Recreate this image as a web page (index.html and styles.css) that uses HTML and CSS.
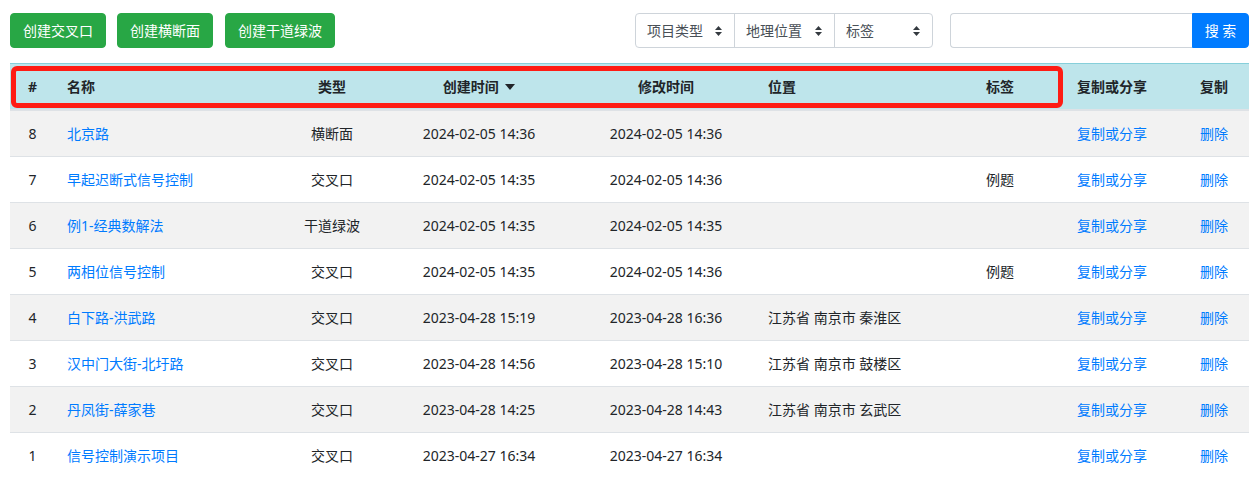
FILE: index.html
```html
<!DOCTYPE html>
<html lang="zh-CN">
<head>
<meta charset="utf-8">
<title>项目列表</title>
<link rel="stylesheet" href="styles.css">
</head>
<body>
<div class="page">
  <div class="toolbar">
    <div class="btns">
      <button class="btn btn-green">创建交叉口</button>
      <button class="btn btn-green">创建横断面</button>
      <button class="btn btn-green">创建干道绿波</button>
    </div>
    <div class="filters">
      <div class="select-group">
        <div class="sel sel-1"><span>项目类型</span><svg class="caret" viewBox="0 0 7 10" width="7" height="10"><path d="M3.5 0 L7 4 H0 Z M0 6 H7 L3.5 10 Z" fill="#343a40"/></svg></div>
        <div class="sel sel-2"><span>地理位置</span><svg class="caret" viewBox="0 0 7 10" width="7" height="10"><path d="M3.5 0 L7 4 H0 Z M0 6 H7 L3.5 10 Z" fill="#343a40"/></svg></div>
        <div class="sel sel-3"><span>标签</span><svg class="caret" viewBox="0 0 7 10" width="7" height="10"><path d="M3.5 0 L7 4 H0 Z M0 6 H7 L3.5 10 Z" fill="#343a40"/></svg></div>
      </div>
      <div class="search">
        <div class="search-input"></div>
        <button class="btn btn-blue">搜 索</button>
      </div>
    </div>
  </div>

  <div class="table-wrap">
    <table class="tbl">
      <colgroup>
        <col class="c1"><col class="c2"><col class="c3"><col class="c4"><col class="c5"><col class="c6"><col class="c7"><col class="c8"><col class="c9">
      </colgroup>
      <thead>
        <tr>
          <th class="ctr">#</th>
          <th>名称</th>
          <th class="ctr">类型</th>
          <th class="ctr">创建时间 <svg class="sort" viewBox="0 0 10 6" width="10" height="6"><path d="M0 0 H10 L5 6 Z" fill="#212529"/></svg></th>
          <th class="ctr">修改时间</th>
          <th>位置</th>
          <th class="ctr">标签</th>
          <th>复制或分享</th>
          <th>复制</th>
        </tr>
      </thead>
      <tbody>
        <tr><td class="ctr">8</td><td><a>北京路</a></td><td class="ctr">横断面</td><td class="ctr">2024-02-05 14:36</td><td class="ctr">2024-02-05 14:36</td><td></td><td class="ctr"></td><td><a>复制或分享</a></td><td><a>删除</a></td></tr>
        <tr><td class="ctr">7</td><td><a>早起迟断式信号控制</a></td><td class="ctr">交叉口</td><td class="ctr">2024-02-05 14:35</td><td class="ctr">2024-02-05 14:36</td><td></td><td class="ctr">例题</td><td><a>复制或分享</a></td><td><a>删除</a></td></tr>
        <tr><td class="ctr">6</td><td><a>例1-经典数解法</a></td><td class="ctr">干道绿波</td><td class="ctr">2024-02-05 14:35</td><td class="ctr">2024-02-05 14:35</td><td></td><td class="ctr"></td><td><a>复制或分享</a></td><td><a>删除</a></td></tr>
        <tr><td class="ctr">5</td><td><a>两相位信号控制</a></td><td class="ctr">交叉口</td><td class="ctr">2024-02-05 14:35</td><td class="ctr">2024-02-05 14:36</td><td></td><td class="ctr">例题</td><td><a>复制或分享</a></td><td><a>删除</a></td></tr>
        <tr><td class="ctr">4</td><td><a>白下路-洪武路</a></td><td class="ctr">交叉口</td><td class="ctr">2023-04-28 15:19</td><td class="ctr">2023-04-28 16:36</td><td>江苏省 南京市 秦淮区</td><td class="ctr"></td><td><a>复制或分享</a></td><td><a>删除</a></td></tr>
        <tr><td class="ctr">3</td><td><a>汉中门大街-北圩路</a></td><td class="ctr">交叉口</td><td class="ctr">2023-04-28 14:56</td><td class="ctr">2023-04-28 15:10</td><td>江苏省 南京市 鼓楼区</td><td class="ctr"></td><td><a>复制或分享</a></td><td><a>删除</a></td></tr>
        <tr><td class="ctr">2</td><td><a>丹凤街-薛家巷</a></td><td class="ctr">交叉口</td><td class="ctr">2023-04-28 14:25</td><td class="ctr">2023-04-28 14:43</td><td>江苏省 南京市 玄武区</td><td class="ctr"></td><td><a>复制或分享</a></td><td><a>删除</a></td></tr>
        <tr><td class="ctr">1</td><td><a>信号控制演示项目</a></td><td class="ctr">交叉口</td><td class="ctr">2023-04-27 16:34</td><td class="ctr">2023-04-27 16:34</td><td></td><td class="ctr"></td><td><a>复制或分享</a></td><td><a>删除</a></td></tr>
      </tbody>
    </table>
    <div class="highlight"></div>
  </div>
</div>
</body>
</html>
```

FILE: styles.css
```css
* { box-sizing: border-box; }
html, body { margin: 0; padding: 0; background: #fff; }
body {
  font-family: "Noto Sans", "Noto Sans CJK SC", sans-serif;
  font-size: 14px;
  line-height: 21px;
  color: #212529;
}
.page { padding: 13px 10px 0 10px; }

.toolbar {
  display: flex;
  justify-content: space-between;
  align-items: flex-start;
  height: 35px;
}
.btns { display: flex; gap: 11px; }
.btns .btn:last-child { margin-left: 1px; }
.btn {
  font-family: inherit;
  font-size: 14px;
  line-height: 21px;
  padding: 6px 12px;
  border: 1px solid transparent;
  border-radius: 4px;
  color: #fff;
  cursor: pointer;
  height: 35px;
}
.btn-green { background: #28a745; border-color: #28a745; }
.btn-blue {
  background: #007bff;
  border-color: #007bff;
  border-radius: 0 4px 4px 0;
  width: 57px;
  padding: 6px 0;
}

.filters { display: flex; gap: 17px; }
.select-group {
  display: flex;
  border: 1px solid #ced4da;
  border-radius: 4px;
  height: 35px;
}
.sel {
  display: flex;
  align-items: center;
  justify-content: space-between;
  padding: 0 12px 0 11px;
  color: #495057;
  height: 33px;
}
.sel + .sel { border-left: 1px solid #ced4da; }
.sel-1 { width: 98px; }
.sel-2 { width: 100px; }
.sel-3 { width: 98px; }
.caret { display: block; }

.search { display: flex; }
.search-input {
  width: 242px;
  height: 35px;
  border: 1px solid #ced4da;
  border-right: none;
  border-radius: 4px 0 0 4px;
}

.table-wrap { position: relative; margin-top: 15px; }
.tbl {
  width: 100%;
  border-collapse: collapse;
  table-layout: fixed;
}
.c1 { width: 45px; }
.c2 { width: 227px; }
.c3 { width: 100px; }
.c4 { width: 194px; }
.c5 { width: 180px; }
.c6 { width: 179px; }
.c7 { width: 130px; }
.c8 { width: 123px; }
.c9 { width: 61px; }

.tbl th, .tbl td {
  padding: 12px 12px;
  text-align: left;
  vertical-align: top;
  white-space: nowrap;
}
.tbl thead th {
  background: #bee5eb;
  font-weight: 700;
  border-top: 1px solid #86cfda;
  border-bottom: 2px solid #dee2e6;
  padding: 12px 12px 12px;
}
.tbl tbody td { border-top: 1px solid #dee2e6; }
.tbl tbody tr:nth-child(odd) { background: #f2f2f2; }
.tbl .ctr { text-align: center; }
.tbl a { color: #007bff; text-decoration: none; cursor: pointer; }
.sort { vertical-align: middle; margin-left: 3px; position: relative; top: -1px; }

.highlight {
  position: absolute;
  left: 1px;
  top: 3px;
  width: 1052px;
  height: 42px;
  border: 5px solid #fe1c14;
  border-radius: 6px;
  pointer-events: none;
}
```
